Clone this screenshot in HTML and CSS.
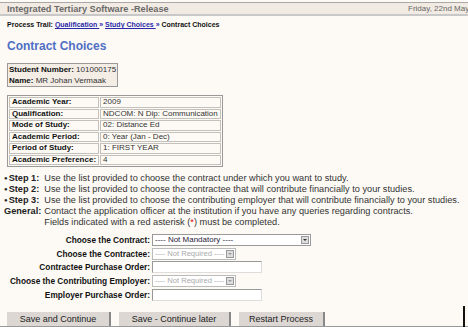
FILE: index.html
```html
<!DOCTYPE html>
<html lang="en">
<head>
    <meta charset="UTF-8">
    <title>Contract Choices</title>
    <link rel="stylesheet" href="styles.css">
</head>
<body>
    <!-- Top bar -->
    <div class="topbar">
        <span class="app-name">Integrated Tertiary Software -Release</span>
        <span class="date">Friday, 22nd May 2009</span>
    </div>

    <!-- Process trail -->
    <div class="trail">
        <b>Process Trail:</b> <a href="#">Qualification&nbsp;</a><span class="arrows">&raquo;</span> <a href="#">Study Choices&nbsp;</a><span class="arrows">&raquo;</span> <b>Contract Choices</b>
    </div>

    <h1 class="page-title">Contract Choices</h1>

    <!-- Student -->
    <table class="student-box">
        <tr><td><b>Student Number:</b> 101000175</td></tr>
        <tr><td><b>Name:</b> MR Johan Vermaak</td></tr>
    </table>

    <!-- Academic info -->
    <table class="info">
        <tr><th>Academic Year:</th><td>2009</td></tr>
        <tr><th>Qualification:</th><td>NDCOM: N Dip: Communication</td></tr>
        <tr><th>Mode of Study:</th><td>02: Distance Ed</td></tr>
        <tr><th>Academic Period:</th><td>0: Year (Jan - Dec)</td></tr>
        <tr><th>Period of Study:</th><td>1: FIRST YEAR</td></tr>
        <tr><th>Academic Preference:</th><td>4</td></tr>
    </table>

    <!-- Steps -->
    <table class="steps">
        <tr><th><span class="dot">&#9679;</span>Step 1:</th><td>Use the list provided to choose the contract under which you want to study.</td></tr>
        <tr><th><span class="dot">&#9679;</span>Step 2:</th><td>Use the list provided to choose the contractee that will contribute financially to your studies.</td></tr>
        <tr><th><span class="dot">&#9679;</span>Step 3:</th><td>Use the list provided to choose the contributing employer that will contribute financially to your studies.</td></tr>
        <tr><th>General:</th><td>Contact the application officer at the institution if you have any queries regarding contracts.<br>Fields indicated with a red asterisk (<span class="req">*</span>) must be completed.</td></tr>
    </table>

    <!-- Form -->
    <table class="contract-form">
        <tr>
            <th>Choose the Contract:</th>
            <td><div class="select wide"><span>---- Not Mandatory ----</span><i class="arrow"></i></div></td>
        </tr>
        <tr>
            <th>Choose the Contractee:</th>
            <td><div class="select off"><span>---- Not Required ----</span><i class="arrow"></i></div></td>
        </tr>
        <tr>
            <th>Contractee Purchase Order:</th>
            <td><div class="text-input"></div></td>
        </tr>
        <tr>
            <th>Choose the Contributing Employer:</th>
            <td><div class="select off"><span>---- Not Required ----</span><i class="arrow"></i></div></td>
        </tr>
        <tr>
            <th>Employer Purchase Order:</th>
            <td><div class="text-input"></div></td>
        </tr>
    </table>

    <!-- Buttons -->
    <div class="button-bar">
        <button class="b1">Save and Continue</button>
        <button class="b2">Save - Continue later</button>
        <button class="b3">Restart Process</button>
        <span class="edge"></span>
    </div>
</body>
</html>
```

FILE: styles.css
```css
html, body {
    height: 100%;
}

body {
    margin: 0;
    background-color: #fdfaf5;
    font-family: 'Liberation Sans', Arial, sans-serif;
    font-size: 8px;
    color: #222;
    overflow: hidden;
}

/* Top bar */
.topbar {
    margin-top: 2px;
    height: 11px;
    border-top: 1px solid #a8a8a8;
    border-bottom: 2px solid #c8c8c8;
    background-color: #f2ebe3;
    display: flex;
    align-items: center;
    padding-left: 7px;
    white-space: nowrap;
    overflow: hidden;
}

.app-name {
    font-weight: bold;
    font-size: 9.2px;
    color: #6a6a6a;
}

.date {
    margin-left: auto;
    width: 60px;
    flex-shrink: 0;
    font-size: 8px;
    color: #666;
}

/* Process trail */
.trail {
    font-size: 7px;
    font-weight: bold;
    padding: 5px 0 0 7px;
    color: #111;
    white-space: nowrap;
}

.trail a {
    color: #2a2aa8;
}

.arrows {
    color: #2a2aa8;
}

.page-title {
    font-size: 12px;
    color: #4f6fc4;
    margin: 11px 0 0 7px;
    font-weight: bold;
}

/* Student box */
.student-box {
    margin: 10px 0 0 7px;
    border: 1px solid #999;
    background-color: #f3ede6;
    border-collapse: collapse;
    width: 108px;
}

.student-box td {
    padding: 0 1px;
    line-height: 11px;
    color: #333;
    white-space: nowrap;
}

.student-box b {
    color: #111;
}

/* Info table */
.info {
    margin: 8px 0 0 7px;
    border: 1px solid #999;
    border-collapse: separate;
    border-spacing: 1px;
    width: 206px;
}

.info th, .info td {
    border: 1px solid #c4c0bc;
    text-align: left;
    padding: 0 2px;
    height: 8.5px;
    line-height: 8.5px;
    white-space: nowrap;
}

.info th {
    width: 78px;
    color: #111;
}

.info td {
    color: #333;
}

/* Steps */
.steps {
    margin: 6px 0 0 4px;
    border-collapse: collapse;
    font-size: 9.2px;
}

.steps th {
    text-align: left;
    vertical-align: top;
    padding: 0 3px 0 0;
    white-space: nowrap;
    line-height: 11px;
    color: #222;
}

.steps td {
    padding: 0;
    line-height: 11px;
    color: #333;
    white-space: nowrap;
}

.dot {
    font-size: 6px;
    vertical-align: 1px;
    margin-right: 1px;
}

.req {
    color: #d00;
}

/* Form */
.contract-form {
    margin: 5px 0 0 0;
    border-collapse: collapse;
}

.contract-form th {
    width: 150px;
    font-size: 8.3px;
    text-align: right;
    padding: 0 2px 0 0;
    height: 13.7px;
    white-space: nowrap;
    color: #111;
}

.contract-form td {
    padding: 0;
}

.select {
    display: flex;
    align-items: center;
    justify-content: space-between;
    box-sizing: border-box;
    height: 12px;
    border: 1px solid #999;
    background-color: #fff;
    padding-left: 2px;
    color: #2a1a3a;
    white-space: nowrap;
    overflow: hidden;
}

.select.wide {
    width: 159px;
}

.select.off {
    width: 84px;
    font-size: 7.6px;
    color: #aaa;
    border-color: #bbb;
}

.arrow {
    flex-shrink: 0;
    width: 8px;
    height: 8px;
    margin: 0 1px 0 1px;
    background-color: #ddd;
    border: 1px solid #999;
    box-sizing: border-box;
    position: relative;
}

.arrow::after {
    content: "";
    position: absolute;
    left: 1px;
    top: 2px;
    border-left: 2px solid transparent;
    border-right: 2px solid transparent;
    border-top: 2px solid #333;
}

.select.off .arrow::after {
    border-top-color: #999;
}

.text-input {
    box-sizing: border-box;
    width: 110px;
    height: 12px;
    border: 1px solid #999;
    border-right-color: #ddd;
    border-bottom-color: #ddd;
    background-color: #fff;
}

/* Buttons */
.button-bar {
    position: relative;
    margin-top: 11px;
    padding-left: 7px;
    display: flex;
    border-bottom: 2px solid #999;
    height: 14px;
    align-items: flex-end;
}

.button-bar button {
    font-family: 'Liberation Sans', Arial, sans-serif;
    font-size: 9px;
    color: #222;
    background-color: #dcd7d3;
    border: none;
    border-right: 2px solid #888;
    height: 14px;
    padding: 0;
    margin: 0;
}

.b1 {
    width: 104px;
    margin-right: 8px !important;
}

.b2 {
    width: 112px;
    margin-right: 8px !important;
}

.b3 {
    width: 86px;
}

.edge {
    position: absolute;
    right: 3px;
    bottom: -2px;
    width: 2px;
    height: 22px;
    background-color: #111;
}
```
